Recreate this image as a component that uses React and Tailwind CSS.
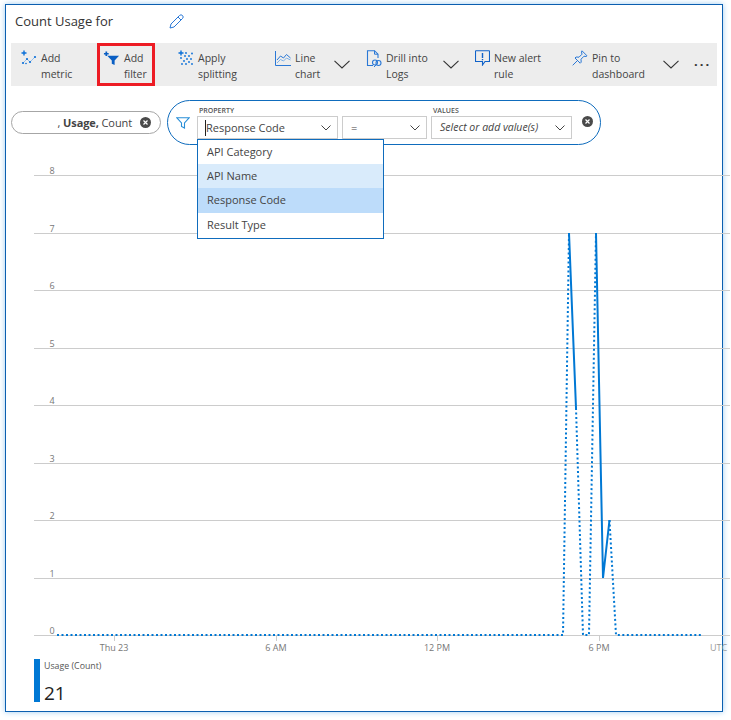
import React from 'react';

const Plus = ({ x, y }) => (
  <path d={`M${x - 2.5} ${y}h5M${x} ${y - 2.5}v5`} stroke="#0a6fd8" strokeWidth="1.4" fill="none" />
);

const MetricIcon = () => (
  <svg width="16" height="16" viewBox="0 0 16 16">
    <Plus x={3} y={3} />
    <path d="M2 13L6 9l3 3 5-5" stroke="#7fb2e8" strokeWidth=".8" fill="none" />
    <g fill="#0a6fd8">
      <circle cx="2" cy="13" r="1.1" /><circle cx="6" cy="9" r="1.1" />
      <circle cx="9" cy="12" r="1.1" /><circle cx="14" cy="7" r="1.1" />
      <circle cx="5" cy="13.5" r=".8" />
    </g>
  </svg>
);

const FilterIcon = () => (
  <svg width="17" height="16" viewBox="0 0 18 16">
    <path d="M1 3.5h5M3.500 1v5" stroke="#0a5fc4" strokeWidth="1.800" fill="none" />
    <path d="M4.500 5.500H17l-4.700 5.200V15.500l-3-1.500v-3.300z" fill="#0a5fc4" />
  </svg>
);

const SplitIcon = () => (
  <svg width="16" height="16" viewBox="0 0 16 16">
    <Plus x={3} y={3} />
    <g fill="#0a6fd8">
      <circle cx="8" cy="3" r=".9" /><circle cx="14" cy="3.500" r=".9" />
      <circle cx="3" cy="8" r=".9" /><circle cx="7" cy="6" r=".9" />
      <circle cx="11" cy="6" r=".9" /><circle cx="9" cy="9" r=".9" />
      <circle cx="13" cy="9" r=".9" /><circle cx="6" cy="11" r=".9" />
      <circle cx="11" cy="12" r=".9" /><circle cx="4" cy="14" r=".9" />
      <circle cx="14" cy="14" r=".9" /><circle cx="8" cy="14" r=".9" />
    </g>
  </svg>
);

const LineChartIcon = () => (
  <svg width="16" height="16" viewBox="0 0 16 16" fill="none">
    <path d="M.5 1v14.500H16" stroke="#2a78d6" />
    <path d="M2 10l3.500-4 3 2 3-3.500L15.500 8" stroke="#2a78d6" />
    <path d="M2 13l3.500-3.500 3 1.500 3-3 4 2" stroke="#7fb2e8" />
  </svg>
);

const LogsIcon = () => (
  <svg width="16" height="18" viewBox="0 0 16 18" fill="none">
    <path d="M7 15.500H1.500V.7h7L12 4.200V8" stroke="#2a78d6" strokeWidth="1.100" />
    <path d="M8.500.7v3.500H12" stroke="#2a78d6" />
    <circle cx="9" cy="12.500" r="2.500" stroke="#2a78d6" strokeWidth="1.100" />
    <circle cx="12.500" cy="13" r="2.500" stroke="#2a78d6" strokeWidth="1.100" />
    <path d="M10 15l-2 2" stroke="#2a78d6" />
  </svg>
);

const AlertIcon = () => (
  <svg width="15" height="16" viewBox="0 0 15 16" fill="none">
    <path d="M1 .8h13a.5.500 0 0 1 .5.500v10.200H10L7.500 15v-3.500H.5V1.300A.5.500 0 0 1 1 .8z" stroke="#0f62c9" strokeWidth="1.100" />
    <path d="M7.500 3v5M7.500 9v1.300" stroke="#0f62c9" strokeWidth="1.400" />
  </svg>
);

const PinIcon = () => (
  <svg width="16" height="16" viewBox="0 0 16 16" fill="none" stroke="#2a78d6">
    <path d="M10 .8l5 5-1 .7-2-.3-3 3 .2 3-1 1L3 8l1-1 3 .2 3-3L9.500 2z" />
    <path d="M5 11L.7 15.300" />
  </svg>
);

const Chevron = () => (
  <svg width="16" height="9" viewBox="0 0 16 9" fill="none">
    <path d="M.5.8L8 8l7.500-7.200" stroke="#333" strokeWidth="1.100" />
  </svg>
);

const SmallChevron = () => (
  <svg width="10" height="6" viewBox="0 0 10 6" fill="none">
    <path d="M.5.500L5 5l4.500-4.500" stroke="#444" strokeWidth="1" />
  </svg>
);

const CloseDot = () => (
  <svg width="11" height="11" viewBox="0 0 11 11">
    <circle cx="5.500" cy="5.500" r="5.500" fill="#4a4a4a" />
    <path d="M3.500 3.500l4 4M7.500 3.500l-4 4" stroke="#fff" strokeWidth="1.200" />
  </svg>
);

function ToolItem({ icon, top, bottom, className }) {
  return (
    <div className={`flex items-start h-full pt-[7px] shrink-0 ${className}`}>
      <div className="shrink-0">{icon}</div>
      <div className="pl-[4px] text-[10.500px] leading-[16px] text-[#444]">
        <div>{top}</div>
        <div>{bottom}</div>
      </div>
    </div>
  );
}

function Select({ className, children }) {
  return (
    <div className={`flex items-center justify-between h-[23px] pt-[1px] border border-[#ccc] bg-white text-[11px] text-[#444] ${className}`}>
      {children}
    </div>
  );
}

const gridY = [175, 233, 290, 348, 405, 463, 520, 578, 635];

function Chart() {
  return (
    <svg width="725" height="560" viewBox="6 145 725 560" className="block">
      {gridY.map((y, i) => (
        <g key={y}>
          <line x1="34" x2="730" y1={y + 0.5} y2={y + 0.5} stroke="#ccc" />
          <text x="52" y={y - 1} textAnchor="middle" fontSize="9" fill="#777">{8 - i}</text>
        </g>
      ))}
      {[[114, 'Thu 23'], [276, '6 AM'], [437, '12 PM'], [599, '6 PM']].map(([x, label]) => (
        <g key={label}>
          <line x1={x + 0.5} x2={x + 0.5} y1="636" y2="641" stroke="#ccc" />
          <text x={x} y="651" textAnchor="middle" fontSize="9" fill="#777">{label}</text>
        </g>
      ))}
      <text x="710" y="651" fontSize="9" fill="#999">UTC</text>
      <g fill="none" stroke="#0078d4" strokeWidth="2">
        <path d="M57 635H563L569 233M576 408L583 635H589L596 233M609.500 520L616 635H702" strokeDasharray="2 2.500" />
        <path d="M569 233L576 408M596 233L603 578L609.500 520" />
      </g>
      <rect x="34" y="659" width="6" height="43" fill="#0078d4" />
      <text x="44" y="669" fontSize="8.800" fill="#555">Usage (Count)</text>
      <text x="44" y="700" fontSize="19" fill="#222">21</text>
    </svg>
  );
}

export default function App() {
  return (
    <div className="w-[731px] h-[720px] bg-white overflow-hidden pt-[4px] pl-[5px] font-['Open_Sans',sans-serif]">
      <div className="w-[718px] h-[708px] border border-[#0b5fb0] bg-white shadow-[0_0_6px_#9fcdf2]">
        <div className="flex items-center h-[38px] pl-[9px] pb-[4px]">
          <span className="w-[154px] text-[13px] text-[#333]">Count Usage for</span>
          <svg width="15" height="15" viewBox="0 0 15 15" fill="none" stroke="#2a78d6" className="-mt-[2px]">
            <path d="M1 14l1-4L10.500 1.500a1.800 1.800 0 0 1 3 3L5 13z" />
            <path d="M9 3l3 3" />
          </svg>
        </div>

        <div className="flex items-stretch h-[43px] mx-[5px] w-[706px] bg-[#ededed]">
          <ToolItem className="w-[86px] pl-[10px]" icon={<MetricIcon />} top="Add" bottom="metric" />
          <ToolItem className="w-[58px] pl-[3px] !pt-[4px] border-[3px] border-[#ed1c24]" icon={<FilterIcon />} top="Add" bottom="filter" />
          <ToolItem className="w-[120px] pl-[23px]" icon={<SplitIcon />} top="Apply" bottom="splitting" />
          <ToolItem className="w-[59px]" icon={<LineChartIcon />} top="Line" bottom="chart" />
          <div className="flex items-center w-[32px] shrink-0"><Chevron /></div>
          <ToolItem className="w-[77px]" icon={<LogsIcon />} top="Drill into" bottom="Logs" />
          <div className="flex items-center w-[32px] shrink-0"><Chevron /></div>
          <ToolItem className="w-[97px]" icon={<AlertIcon />} top="New alert" bottom="rule" />
          <ToolItem className="w-[91px]" icon={<PinIcon />} top="Pin to" bottom="dashboard" />
          <div className="flex items-center w-[31px] shrink-0"><Chevron /></div>
          <div className="flex items-center text-[13px] font-bold tracking-[2px] text-[#333]">···</div>
        </div>

        <div className="flex items-center h-[45px] mt-[14px] ml-[5px]">
          <div className="flex items-center justify-end w-[150px] h-[23px] pr-[9px] rounded-full border border-[#a6a6a6] text-[11px] text-[#444]">
            <span className="pt-[1px] tracking-[-0.1px]">, <b className="font-bold">Usage,</b> Count</span>
            <span className="ml-[8px]"><CloseDot /></span>
          </div>

          <div className="flex w-[434px] h-[45px] ml-[6px] rounded-full border border-[#0f6cbd]">
            <div className="flex items-center w-[29px] pl-[8px] shrink-0">
              <svg width="14" height="12" viewBox="0 0 14 12" fill="none">
                <path d="M.7.7h12.600L8.500 6v5L5.500 9.500V6z" stroke="#2a8fd8" strokeWidth="1.100" />
              </svg>
            </div>
            <div className="flex gap-[4px] pt-[5px]">
              <div className="relative w-[141px]">
                <div className="h-[10px] pl-[2px] text-[7px] leading-[10px] font-semibold text-[#555]">PROPERTY</div>
                <Select className="pl-[7px] pr-[6px]">
                  <span className="border-l border-[#222]">Response Code</span>
                  <SmallChevron />
                </Select>
                <div className="absolute z-10 top-[33px] left-0 w-[187px] h-[100px] border border-[#0f6cbd] bg-white text-[11px] text-[#444]">
                  <div className="flex items-center h-[24px] pl-[9px]">API Category</div>
                  <div className="flex items-center h-[24px] pl-[9px] bg-[#d9ebfb]">API Name</div>
                  <div className="flex items-center h-[25px] pl-[9px] bg-[#bddcfa]">Response Code</div>
                  <div className="flex items-center h-[25px] pl-[9px]">Result Type</div>
                </div>
              </div>
              <div className="w-[85px]">
                <div className="h-[10px]" />
                <Select className="pl-[8px] pr-[6px]">
                  <span>=</span>
                  <SmallChevron />
                </Select>
              </div>
              <div className="w-[141px]">
                <div className="h-[10px] pl-[2px] text-[7px] leading-[10px] font-semibold text-[#555]">VALUES</div>
                <Select className="pl-[8px] pr-[6px]">
                  <span className="italic text-[10.500px]">Select or add value(s)</span>
                  <SmallChevron />
                </Select>
              </div>
            </div>
            <div className="pl-[10px] pt-[15px]"><CloseDot /></div>
          </div>
        </div>

        <Chart />
      </div>
    </div>
  );
}
